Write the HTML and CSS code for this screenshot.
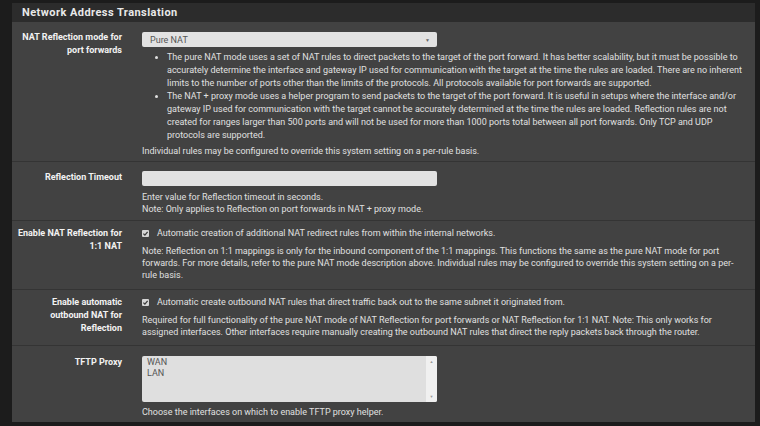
FILE: index.html
```html
<!DOCTYPE html>
<html>
<head>
<meta charset="utf-8">
<link rel="stylesheet" href="styles.css">
</head>
<body>
<div class="panel">
  <div class="panel-heading">Network Address Translation</div>
  <div class="panel-body">
    <div class="row row-mode">
      <div class="label">NAT Reflection mode for port forwards</div>
      <div class="content">
        <div class="select"><span>Pure NAT</span><span class="caret">▼</span></div>
        <ul class="bullets">
          <li>The pure NAT mode uses a set of NAT rules to direct packets to the target of the port forward. It has better scalability, but it must be possible to accurately determine the interface and gateway IP used for communication with the target at the time the rules are loaded. There are no inherent limits to the number of ports other than the limits of the protocols. All protocols available for port forwards are supported.</li>
          <li>The NAT + proxy mode uses a helper program to send packets to the target of the port forward. It is useful in setups where the interface and/or gateway IP used for communication with the target cannot be accurately determined at the time the rules are loaded. Reflection rules are not created for ranges larger than 500 ports and will not be used for more than 1000 ports total between all port forwards. Only TCP and UDP protocols are supported.</li>
        </ul>
        <p class="help indiv">Individual rules may be configured to override this system setting on a per-rule basis.</p>
      </div>
    </div>
    <div class="row row-timeout">
      <div class="label">Reflection Timeout</div>
      <div class="content">
        <div class="input"></div>
        <p class="help">Enter value for Reflection timeout in seconds.<br>Note: Only applies to Reflection on port forwards in NAT + proxy mode.</p>
      </div>
    </div>
    <div class="row row-check row-check1">
      <div class="label">Enable NAT Reflection for 1:1 NAT</div>
      <div class="content">
        <div class="check"><svg width="7" height="7" viewBox="0 0 7 7"><rect x="0" y="0" width="7" height="7" rx="1" fill="#d6d6d6"/><path d="M1.4 3.6 L2.9 5.1 L5.6 1.9" fill="none" stroke="#3a3a3a" stroke-width="1.3"/></svg><span>Automatic creation of additional NAT redirect rules from within the internal networks.</span></div>
        <p class="help">Note: Reflection on 1:1 mappings is only for the inbound component of the 1:1 mappings. This functions the same as the pure NAT mode for port forwards. For more details, refer to the pure NAT mode description above. Individual rules may be configured to override this system setting on a per-rule basis.</p>
      </div>
    </div>
    <div class="row row-check row-check2">
      <div class="label">Enable automatic outbound NAT for Reflection</div>
      <div class="content">
        <div class="check"><svg width="7" height="7" viewBox="0 0 7 7"><rect x="0" y="0" width="7" height="7" rx="1" fill="#d6d6d6"/><path d="M1.4 3.6 L2.9 5.1 L5.6 1.9" fill="none" stroke="#3a3a3a" stroke-width="1.3"/></svg><span>Automatic create outbound NAT rules that direct traffic back out to the same subnet it originated from.</span></div>
        <p class="help">Required for full functionality of the pure NAT mode of NAT Reflection for port forwards or NAT Reflection for 1:1 NAT. Note: This only works for assigned interfaces. Other interfaces require manually creating the outbound NAT rules that direct the reply packets back through the router.</p>
      </div>
    </div>
    <div class="row row-tftp">
      <div class="label">TFTP Proxy</div>
      <div class="content">
        <div class="multi">
          <div class="opts"><div>WAN</div><div>LAN</div></div>
          <div class="scroll"><span>▲</span><span>▼</span></div>
        </div>
        <p class="help">Choose the interfaces on which to enable TFTP proxy helper.</p>
      </div>
    </div>
  </div>
</div>
</body>
</html>
```

FILE: styles.css
```css
html, body {
  margin: 0;
  padding: 0;
  background: #1c1c1c;
  font-family: Roboto, "Liberation Sans", sans-serif;
  color: #e0e0e0;
  font-size: 9px;
}
.panel {
  margin: 3px 5px 0 12px;
  width: 743px;
  background: #424242;
}
.panel-heading {
  height: 19px;
  line-height: 20px;
  background: #2c2c2c;
  color: #e8e8e8;
  font-weight: bold;
  font-size: 11px;
  letter-spacing: 0.45px;
  padding-left: 10px;
  box-sizing: border-box;
}
.row {
  display: grid;
  grid-template-columns: 120px 1fr;
  border-bottom: 1px solid #343434;
}
.row:last-child { border-bottom: none; }
.label {
  text-align: right;
  font-weight: bold;
  color: #f2f2f2;
  padding: 0 10px 0 4px;
  line-height: 13px;
}
.content {
  padding: 0 7px 0 10px;
}
.help {
  margin: 0;
  line-height: 12px;
}
.row-mode { padding: 10px 0 3px; }
.row-mode .label { margin-top: -1px; }
.select {
  width: 295px;
  height: 15px;
  background: #e2e2e2;
  border-radius: 2px;
  box-sizing: border-box;
  display: flex;
  justify-content: space-between;
  align-items: center;
  padding: 0 7px 0 8px;
  color: #555;
}
.caret { font-size: 5px; color: #666; }
.bullets {
  margin: 4px 0 0;
  padding-left: 25px;
  line-height: 13px;
}
.indiv { margin-top: 3px; line-height: 13px; }
.row-timeout { padding: 9px 0 5px; }
.input {
  width: 295px;
  height: 15px;
  background: #e2e2e2;
  border-radius: 2px;
  margin-bottom: 5px;
}
.row-check1 { padding: 6px 0 8px; }
.row-check2 { padding: 6px 0 7px; }
.check {
  display: flex;
  align-items: center;
  line-height: 13px;
  margin-bottom: 5px;
}
.check svg { margin: 0 8px 0 0; flex: none; }
.row-tftp { padding: 10px 0 4px; }
.multi {
  width: 295px;
  height: 46px;
  background: #dfdfdf;
  border-radius: 2px;
  display: flex;
  margin-bottom: 4px;
  overflow: hidden;
}
.opts {
  flex: 1;
  color: #555;
  padding: 1px 5px;
  line-height: 10.5px;
}
.scroll {
  width: 11px;
  background: #f0f0f0;
  display: flex;
  flex-direction: column;
  justify-content: space-between;
  align-items: center;
  font-size: 4px;
  color: #999;
  padding: 3px 0;
}
```
